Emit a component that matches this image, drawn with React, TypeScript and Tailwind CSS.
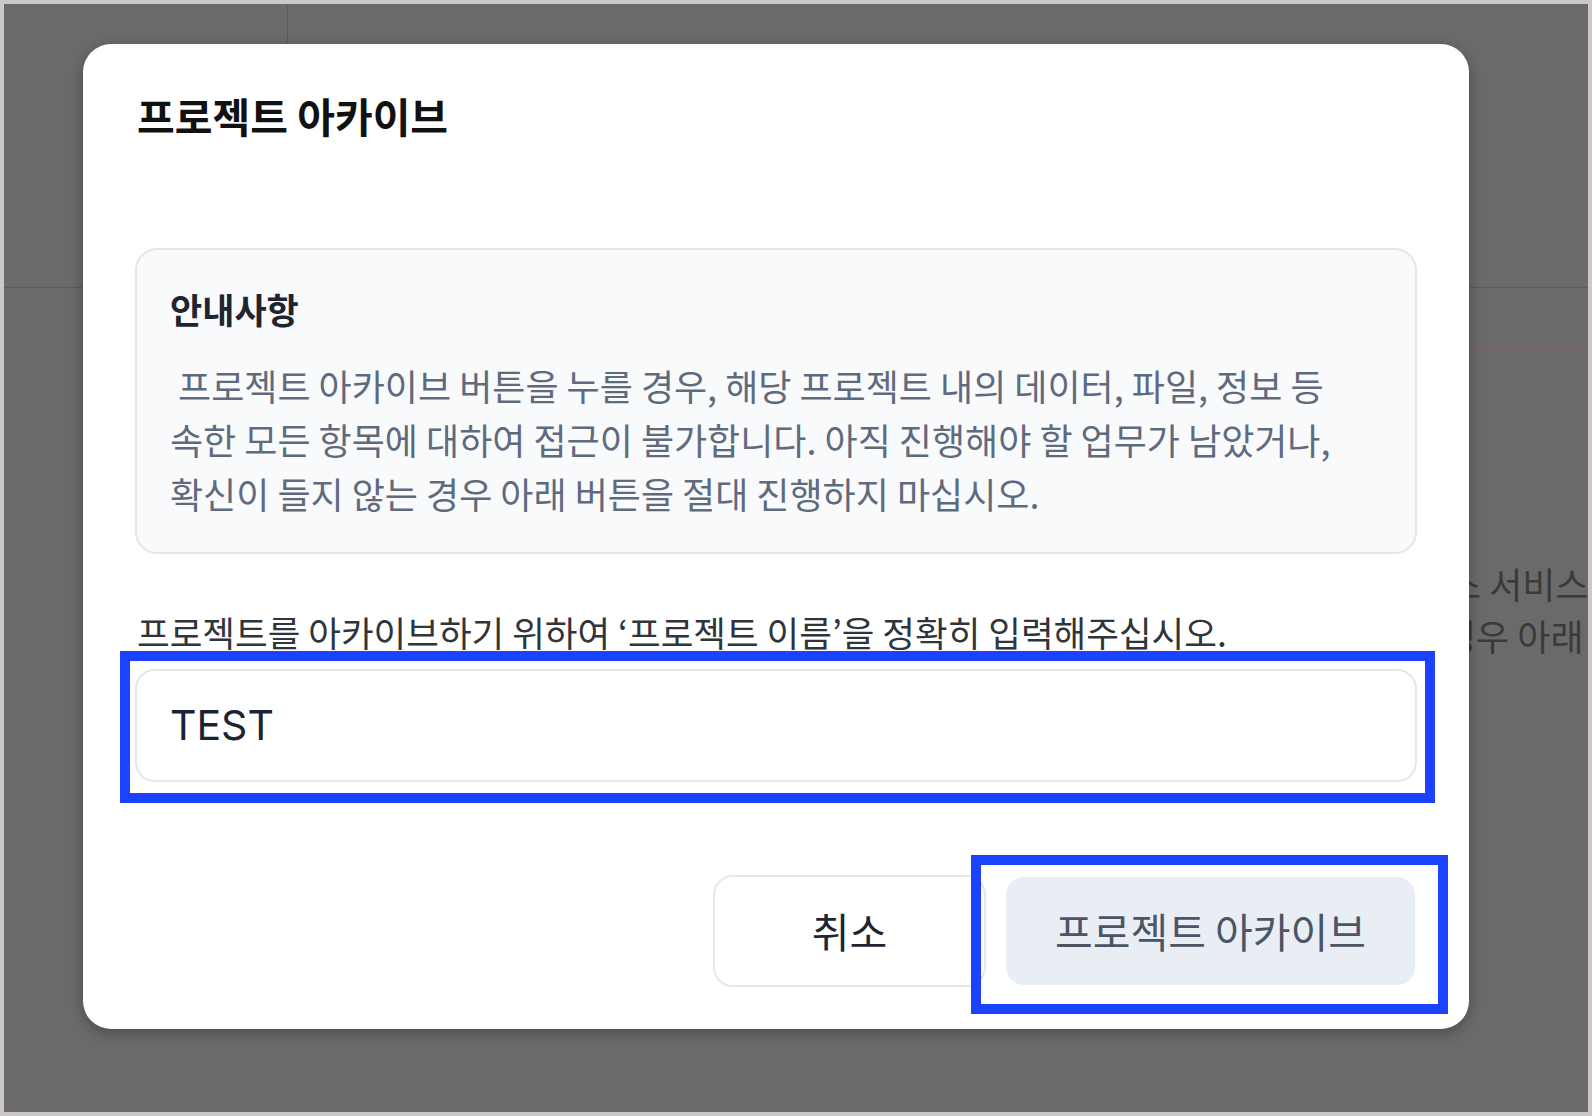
export default function App() {
  return (
    <div className="h-[1116px] w-[1592px] bg-[#cdc8c8] p-[4px] font-['Noto_Sans_CJK_KR',sans-serif]">
      <div className="relative h-full w-full overflow-hidden bg-[#6b6a6a]">
        {/* page behind the overlay */}
        <div className="flex h-[283px]">
          <div className="w-[284px] border-r border-[#5d5c5c]" />
        </div>
        <div className="h-px bg-[#5d5c5c]" />
        <div className="ml-[1100px] mt-[60px] h-[598px] rounded-l-[16px] border-y border-l border-[#7b6262] pl-[343px] pt-[208px] text-[36px] leading-[52px] text-[#3a3a3a]">
          <p className="whitespace-nowrap">스 서비스</p>
          <p className="-ml-[5px] whitespace-nowrap">경우 아래</p>
        </div>

        {/* dialog */}
        <div className="absolute left-[79px] top-[40px] h-[985px] w-[1386px] rounded-[28px] bg-white px-[52px] pb-[42px] pt-[51px] shadow-[0_4px_14px_rgba(0,0,0,0.28)]">
          <h2 className="pl-[2px] text-[41px] font-bold leading-none text-[#111111]">
            프로젝트 아카이브
          </h2>

          <div className="mt-[112px] h-[306px] rounded-[22px] border-2 border-[#e1e6ed] bg-[#f8fafc] pl-[33px] pt-[41px]">
            <p className="text-[35px] font-bold leading-none text-[#1e2430]">안내사항</p>
            <p className="mt-[32px] whitespace-nowrap text-[36px] leading-[54px] text-[#5f6a7c]">
              &nbsp;프로젝트 아카이브 버튼을 누를 경우, 해당 프로젝트 내의 데이터, 파일, 정보 등
              <br />
              속한 모든 항목에 대하여 접근이 불가합니다. 아직 진행해야 할 업무가 남았거나,
              <br />
              확신이 들지 않는 경우 아래 버튼을 절대 진행하지 마십시오.
            </p>
          </div>

          <p className="mt-[60px] whitespace-nowrap pl-[2px] text-[35.5px] leading-none text-[#30343b]">
            프로젝트를 아카이브하기 위하여 ‘프로젝트 이름’을 정확히 입력해주십시오.
          </p>

          <div className="relative mt-[19px]">
            <input
              readOnly
              value="TEST"
              className="h-[113px] w-full rounded-[20px] border-2 border-[#e3e7ee] bg-white pl-[33px] font-['Inter',sans-serif] text-[41px] text-[#1c2233] outline-none"
            />
            <div className="pointer-events-none absolute -left-[15px] -top-[18px] h-[152px] w-[1315px] border-[10px] border-[#1d42ff]" />
          </div>

          <div className="relative mt-[93px] flex justify-end gap-[18px]">
            <button className="h-[112px] w-[273px] rounded-[20px] border-2 border-[#e3e7ee] bg-white text-[41px] text-[#1f2633]">
              취소
            </button>
            <button className="h-[112px] w-[413px] rounded-[20px] border-2 border-white bg-[#e9eef5] text-[41px] text-[#4b5566]">
              프로젝트 아카이브
            </button>
            <div className="pointer-events-none absolute -right-[31px] -top-[20px] h-[159px] w-[477px] border-[10px] border-[#1d42ff]" />
          </div>
        </div>
      </div>
    </div>
  );
}
